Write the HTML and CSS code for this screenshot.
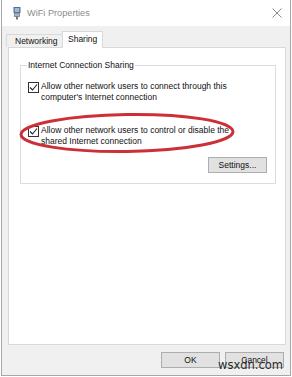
FILE: index.html
```html
<!DOCTYPE html>
<html lang="en">
<head>
  <meta charset="UTF-8" />
  <title>WiFi Properties</title>
  <link rel="stylesheet" href="styles.css">
</head>
<body>
  <div class="window">
    <div class="titlebar">
      <svg class="app-icon" width="8" height="13" viewBox="0 0 8 13">
        <rect x="1" y="0.5" width="6" height="5" fill="#7d9cc4" stroke="#4f6f99" stroke-width="1"/>
        <line x1="3" y1="1" x2="3" y2="5" stroke="#d8e3f0" stroke-width="0.8"/>
        <line x1="5" y1="1" x2="5" y2="5" stroke="#d8e3f0" stroke-width="0.8"/>
        <rect x="1.5" y="6" width="5" height="3.5" fill="#a9b4c0" stroke="#6f7a86" stroke-width="0.8"/>
        <rect x="3" y="9.5" width="2" height="3" fill="#6f7a86"/>
      </svg>
      <span class="title">WiFi Properties</span>
      <svg class="close" width="10" height="10" viewBox="0 0 10 10">
        <path d="M0.5 0.5 L9.5 9.5 M9.5 0.5 L0.5 9.5" stroke="#8a8a8a" stroke-width="1"/>
      </svg>
    </div>

    <div class="content">
      <div class="tabs">
        <div class="tab">Networking</div>
        <div class="tab active">Sharing</div>
      </div>

      <div class="panel">
        <fieldset class="group">
          <legend>Internet Connection Sharing</legend>

          <div class="option first">
            <span class="check">
              <svg width="9" height="9" viewBox="0 0 9 9"><path d="M1 4.5 L3.5 7 L8 1.5" fill="none" stroke="#222" stroke-width="1.1"/></svg>
            </span>
            <span class="option-text">Allow other network users to connect through this<br>computer's Internet connection</span>
          </div>

          <div class="option second">
            <span class="check">
              <svg width="9" height="9" viewBox="0 0 9 9"><path d="M1 4.5 L3.5 7 L8 1.5" fill="none" stroke="#222" stroke-width="1.1"/></svg>
            </span>
            <span class="option-text">Allow other network users to control or disable the<br>shared Internet connection</span>
          </div>

          <div class="settings-row">
            <button class="btn settings">Settings...</button>
          </div>
        </fieldset>

        <svg class="circle" width="216" height="42" viewBox="0 0 216 42">
          <ellipse cx="108" cy="21" rx="106" ry="18.5" fill="none" stroke="#cc2f36" stroke-width="3" transform="rotate(-0.8 108 21)"/>
        </svg>
      </div>

      <div class="footer">
        <button class="btn">OK</button>
        <button class="btn">Cancel</button>
      </div>
    </div>

    <span class="watermark">wsxdn.com</span>
  </div>
</body>
</html>
```

FILE: styles.css
```css
html, body {
  margin: 0;
  padding: 0;
  background: #ffffff;
}
body {
  font-family: "Liberation Sans", Arial, sans-serif;
  font-size: 8.5px;
  color: #111;
}
.window {
  position: relative;
  width: 288px;
  height: 375px;
  margin-left: 1px;
  border: 1px solid #a6a6a6;
  border-top: none;
  background: #f0f0f0;
  display: flex;
  flex-direction: column;
}
.titlebar {
  height: 26px;
  background: #ffffff;
  display: flex;
  align-items: center;
  padding: 0 8px 0 11px;
}
.app-icon {
  margin-right: 6px;
}
.title {
  font-size: 9.2px;
  color: #8c8c8c;
  flex: 1;
}
.content {
  padding: 5px 4px 0 4px;
  flex: 1;
  display: flex;
  flex-direction: column;
}
.tabs {
  display: flex;
  align-items: flex-end;
  height: 16px;
  position: relative;
  z-index: 1;
}
.tab {
  height: 12px;
  line-height: 12px;
  padding: 0 4px 0 8px;
  border: 1px solid #d9d9d9;
  border-bottom: none;
  background: #f0f0f0;
  width: 43px;
}
.tab.active {
  height: 16px;
  line-height: 15px;
  width: 32px;
  padding: 0 2px 0 5px;
  background: #ffffff;
  margin-left: -1px;
  margin-bottom: -1px;
}
.panel {
  position: relative;
  width: 276px;
  height: 296px;
  margin-left: 2px;
  background: #ffffff;
  border: 1px solid #d9d9d9;
}
.group {
  margin: 12px 0 0 11px;
  width: 240px;
  padding: 0 7px 10px 7px;
  border: 1px solid #dcdcdc;
}
.group legend {
  padding: 0 1px;
  margin-left: -1px;
  line-height: 11px;
}
.option {
  display: flex;
  align-items: flex-start;
  line-height: 11px;
}
.option.first {
  margin-top: 10px;
}
.option.second {
  margin-top: 22px;
}
.check {
  width: 9px;
  height: 9px;
  border: 1px solid #333;
  margin: 1px 2px 0 0;
  background: #fff;
  display: flex;
}
.settings-row {
  display: flex;
  justify-content: flex-end;
  margin-top: 10px;
}
.btn {
  font-family: "Liberation Sans", Arial, sans-serif;
  font-size: 8.5px;
  color: #111;
  height: 16px;
  width: 59px;
  padding: 0;
  background: #e1e1e1;
  border: 1px solid #adadad;
}
.settings {
  margin-right: 1px;
}
.circle {
  position: absolute;
  left: 10px;
  top: 64px;
}
.footer {
  display: flex;
  justify-content: flex-end;
  gap: 5px;
  margin-top: 7px;
  padding-right: 2px;
}
.watermark {
  position: absolute;
  left: 216px;
  top: 358px;
  font-family: "DejaVu Sans", sans-serif;
  font-size: 11.5px;
  color: #2b2b2b;
}
```
